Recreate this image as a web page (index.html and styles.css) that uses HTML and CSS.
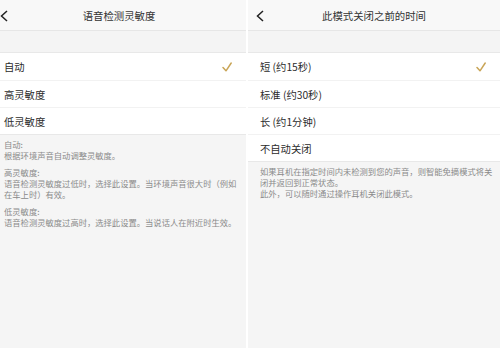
FILE: index.html
```html
<!DOCTYPE html>
<html lang="zh-CN">
<head>
    <meta charset="UTF-8">
    <meta name="viewport" content="width=device-width, initial-scale=1.0">
    <title>灵敏度 / 关闭时间</title>
    <link rel="stylesheet" href="styles.css">
</head>
<body>
    <div class="screens">
        <div class="panel panel-cut">
            <div class="header">
                <svg class="back" width="8" height="12" viewBox="0 0 8 12"><polyline points="7,1 1.5,6 7,11" fill="none" stroke="#222" stroke-width="1.5"/></svg>
                <span class="title">语音检测灵敏度</span>
            </div>
            <div class="band"></div>
            <div class="list">
                <div class="row">自动<svg class="check" width="10" height="10" viewBox="0 0 10 10"><polyline points="1,5.5 4,8.8 9.2,1" fill="none" stroke="#c9a557" stroke-width="1.5" stroke-linecap="round" stroke-linejoin="round"/></svg></div>
                <div class="row">高灵敏度</div>
                <div class="row">低灵敏度</div>
            </div>
            <div class="desc">
                <p>自动:<br>根据环境声音自动调整灵敏度。</p>
                <p>高灵敏度:<br>语音检测灵敏度过低时，选择此设置。当环境声音很大时（例如<br>在车上时）有效。</p>
                <p>低灵敏度:<br>语音检测灵敏度过高时，选择此设置。当说话人在附近时生效。</p>
            </div>
        </div>
        <div class="panel">
            <div class="header">
                <svg class="back" width="8" height="12" viewBox="0 0 8 12"><polyline points="7,1 1.5,6 7,11" fill="none" stroke="#222" stroke-width="1.5"/></svg>
                <span class="title">此模式关闭之前的时间</span>
            </div>
            <div class="band"></div>
            <div class="list">
                <div class="row">短 (约15秒)<svg class="check" width="10" height="10" viewBox="0 0 10 10"><polyline points="1,5.5 4,8.8 9.2,1" fill="none" stroke="#c9a557" stroke-width="1.5" stroke-linecap="round" stroke-linejoin="round"/></svg></div>
                <div class="row">标准 (约30秒)</div>
                <div class="row">长 (约1分钟)</div>
                <div class="row">不自动关闭</div>
            </div>
            <div class="desc">
                <p>如果耳机在指定时间内未检测到您的声音，则智能免摘模式将关<br>闭并返回到正常状态。<br>此外，可以随时通过操作耳机关闭此模式。</p>
            </div>
        </div>
    </div>
</body>
</html>
```

FILE: styles.css
```css
* { margin: 0; padding: 0; box-sizing: border-box; }
body {
    width: 500px;
    height: 348px;
    overflow: hidden;
    background: #fff;
    font-family: "Noto Sans CJK SC", "Noto Sans", sans-serif;
    color: #333;
}
.screens {
    display: flex;
    gap: 2px;
    height: 348px;
}
.panel {
    width: 252px;
    display: flex;
    flex-direction: column;
    background: #f5f5f5;
}
.panel-cut {
    width: 254px;
    margin-left: -8px;
}
.header {
    position: relative;
    height: 31px;
    display: flex;
    align-items: center;
    justify-content: center;
    background: #f8f8f8;
    border-bottom: 1px solid #e6e6e6;
}
.back {
    position: absolute;
    left: 8px;
    top: 10px;
}
.title {
    font-size: 10.4px;
    color: #333;
}
.band {
    height: 22px;
    background: #f4f4f4;
    border-bottom: 1px solid #e8e8e8;
}
.list {
    background: #fff;
    border-bottom: 1px solid #e8e8e8;
}
.row {
    height: 27px;
    display: flex;
    align-items: center;
    justify-content: space-between;
    padding: 0 14px 0 12px;
    font-size: 10.3px;
    color: #2b2b2b;
    border-top: 1px solid #f2f2f2;
}
.row:first-child { border-top: none; }
.desc {
    flex: 1;
    padding: 4px 0 0 12px;
    font-size: 8.3px;
    line-height: 11px;
    color: #8a8a8a;
    white-space: nowrap;
}
.desc p { margin-bottom: 6px; }
```
